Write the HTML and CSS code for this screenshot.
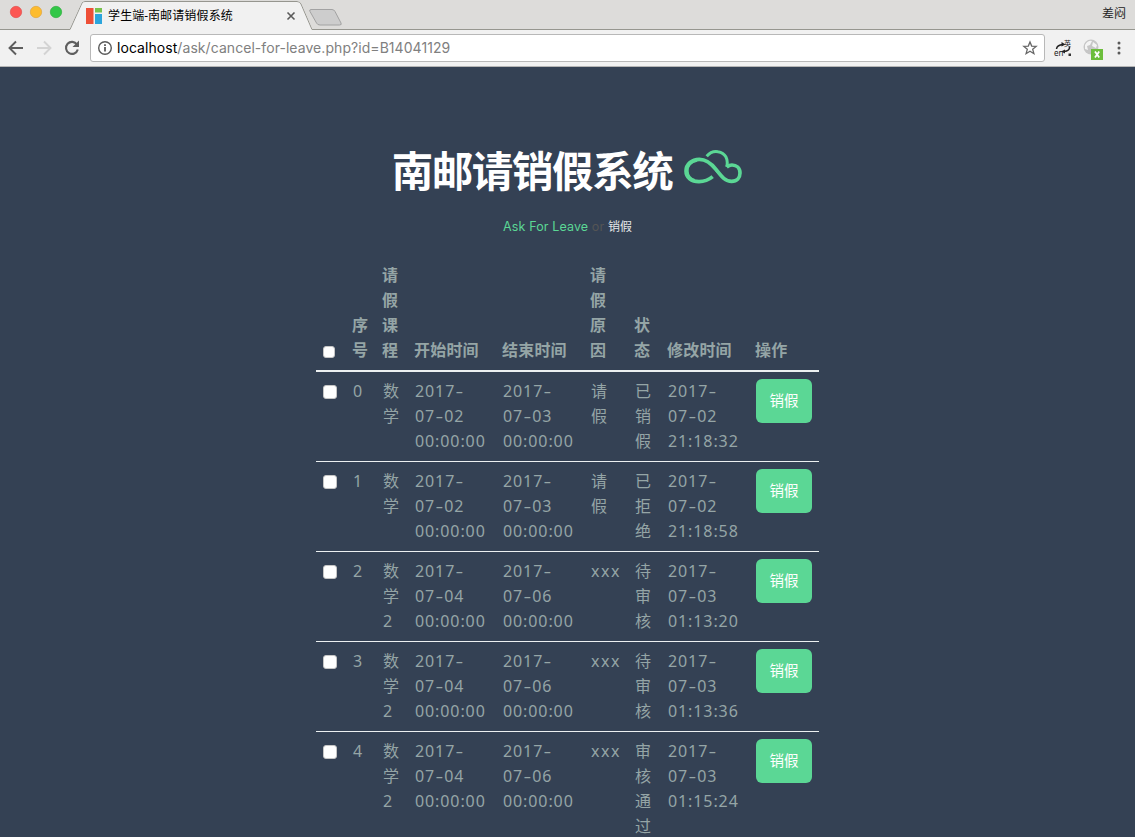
FILE: index.html
```
<!DOCTYPE html>
<html lang="zh-CN">
<head>
<meta charset="utf-8">
<title>学生端-南邮请销假系统</title>
<link rel="stylesheet" href="styles.css">
</head>
<body>
<header class="browser">
  <svg class="tabstrip" width="1135" height="30" viewBox="0 0 1135 30">
    <path d="M0 29.5H70L82 3Q83 1.5 85 1.5H297Q300 1.5 301 4L312 29.5H1135V31H0Z" fill="#f1f1f1" stroke="#96968f"/>
    <path d="M0 0H1135V29H312.500L301.500 3.500Q300 1 297 1H85Q83 1 81.500 3L69.500 29H0Z" fill="#dddcda"/>
    <circle cx="16" cy="12" r="5.7" fill="#fc5753" stroke="#df4744" stroke-width=".6"/>
    <circle cx="36" cy="12" r="5.7" fill="#fdbc2e" stroke="#de9f34" stroke-width=".6"/>
    <circle cx="56" cy="12" r="5.7" fill="#33c748" stroke="#27aa35" stroke-width=".6"/>
    <path d="M86 8h7.5v16H86z" fill="#ee4f37"/>
    <path d="M95 8h7v4.5h-7z" fill="#79c14d"/>
    <path d="M95 14h7v10h-7z" fill="#2ca5dc"/>
    <path d="M287.5 12.5l7 7m0-7l-7 7" stroke="#5a5a5a" stroke-width="1.6"/>
    <path d="M311 9.5H332Q334 9.5 335 11.500L341 23Q342 25 339.500 25H320Q317.500 25 316.500 23L310 11.500Q309 9.500 311 9.500Z" fill="#cdcdcd" stroke="#a2a2a2"/>
  </svg>
  <span class="tab-title">学生端-南邮请销假系统</span>
  <span class="profile">差闷</span>
  <div class="toolbar">
    <svg class="nav" width="90" height="36" viewBox="0 0 90 36" fill="none" stroke-width="1.9">
      <path d="M23 18H10M16 11.500L9.500 18L16 24.500" stroke="#5e5e5e"/>
      <path d="M37 18h13M44 11.500L50.500 18L44 24.500" stroke="#d3d3d3"/>
      <path d="M77 14.500A6 6 0 1 0 77.800 19.500" stroke="#5e5e5e" stroke-width="2.100"/>
      <path d="M79 10.500V17H72.500Z" fill="#5e5e5e"/>
    </svg>
    <div class="address">
      <svg width="16" height="16" viewBox="0 0 16 16"><circle cx="8" cy="8" r="6.300" fill="none" stroke="#5a5a5a" stroke-width="1.400"/><path d="M7.100 7h1.800v4.500H7.100zM7.100 4.200h1.800v1.700H7.100z" fill="#5a5a5a"/></svg>
      <span class="url"><b>localhost</b>/ask/cancel-for-leave.php?id=B14041129</span>
      <svg class="star" width="16" height="16" viewBox="0 0 16 16"><path d="M8 1.900L9.700 6.100L14.200 6.400L10.700 9.300L11.900 13.700L8 11.300L4.100 13.700L5.300 9.300L1.800 6.400L6.300 6.100Z" fill="none" stroke="#666" stroke-width="1.300"/></svg>
    </div>
    <svg class="tools" width="90" height="36" viewBox="0 0 90 36">
      <path d="M11.500 19Q12 15 18 14.500M24.500 16.500Q25 21 19 21.500" fill="none" stroke="#222" stroke-width="1.500"/>
      <path d="M16.500 12l4 2.500-4 2zM20 19.500l-4 2 4 2z" fill="#222"/>
      <text x="9" y="26" class="en">en</text>
      <text x="19" y="16" class="zh">英</text>
      <path d="M23.500 23.500h2.500v2.500h-2.500z" fill="#333"/>
      <circle cx="46" cy="17" r="7.500" fill="#c6c6c6"/>
      <path d="M40 15Q43 10 47 11L45 15L42 16L43 20L40 19ZM48 12L52 15L51 18L47 16Z" fill="#f4f4f4"/>
      <path d="M46 19h12v11H46z" fill="#6cbe3c"/>
      <path d="M50 21.500l4.200 6m0-6l-4.200 6" stroke="#fff" stroke-width="1.800"/>
      <circle cx="74" cy="13" r="1.500" fill="#5a5a5a"/><circle cx="74" cy="18" r="1.500" fill="#5a5a5a"/><circle cx="74" cy="23" r="1.500" fill="#5a5a5a"/>
    </svg>
  </div>
</header>
<main class="page">
  <h1 class="title"><span>南邮请销假系统</span>
    <svg class="cloud" width="60" height="38" viewBox="0 0 180 114" fill="none" stroke="#5bd795" stroke-linejoin="round">
      <path d="M89 83C77 93 65 98 48 98C25 98 9 86 9 66C9 46 26 31 49 31C71 31 87 46 99 61C114 80 125 97 146 97C162 97 171 86 171 72C171 57 160 48 147 48C141 48 136 50 131 54" stroke-width="11"/>
      <path d="M13 66C13 48 26 37 42 34M13 66C13 80 23 91 35 94M80 43C94 56 107 74 122 88" stroke-width="8"/>
      <path d="M71 22C81 10 94 6 105 8C127 11 137 31 131 54" stroke-width="9"/>
    </svg>
  </h1>
  <p class="links"><a class="ask">Ask For Leave</a> or <span class="cancel">销假</span></p>
  <table class="records">
    <colgroup><col class="c-check"><col class="c-no"><col class="c-course"><col class="c-time"><col class="c-time"><col class="c-reason"><col class="c-state"><col class="c-time"><col class="c-action"></colgroup>
    <thead><tr><th><i class="box box-small"></i></th><th>序号</th><th>请假课程</th><th>开始时间</th><th>结束时间</th><th>请<br>假<br>原<br>因</th><th>状态</th><th>修改时间</th><th>操作</th></tr></thead>
    <tbody>
      <tr><td><i class="box"></i></td><td>0</td><td>数学</td><td>2017<s>-</s><br>07<s>-</s>02<br>00:00:00</td><td>2017<s>-</s><br>07<s>-</s>03<br>00:00:00</td><td>请<br>假</td><td>已销假</td><td>2017<s>-</s><br>07<s>-</s>02<br>21:18:32</td><td><button class="btn">销假</button></td></tr>
      <tr><td><i class="box"></i></td><td>1</td><td>数学</td><td>2017<s>-</s><br>07<s>-</s>02<br>00:00:00</td><td>2017<s>-</s><br>07<s>-</s>03<br>00:00:00</td><td>请<br>假</td><td>已拒绝</td><td>2017<s>-</s><br>07<s>-</s>02<br>21:18:58</td><td><button class="btn">销假</button></td></tr>
      <tr><td><i class="box"></i></td><td>2</td><td>数学<br>2</td><td>2017<s>-</s><br>07<s>-</s>04<br>00:00:00</td><td>2017<s>-</s><br>07<s>-</s>06<br>00:00:00</td><td>xxx</td><td>待审核</td><td>2017<s>-</s><br>07<s>-</s>03<br>01:13:20</td><td><button class="btn">销假</button></td></tr>
      <tr><td><i class="box"></i></td><td>3</td><td>数学<br>2</td><td>2017<s>-</s><br>07<s>-</s>04<br>00:00:00</td><td>2017<s>-</s><br>07<s>-</s>06<br>00:00:00</td><td>xxx</td><td>待审核</td><td>2017<s>-</s><br>07<s>-</s>03<br>01:13:36</td><td><button class="btn">销假</button></td></tr>
      <tr><td><i class="box"></i></td><td>4</td><td>数学<br>2</td><td>2017<s>-</s><br>07<s>-</s>04<br>00:00:00</td><td>2017<s>-</s><br>07<s>-</s>06<br>00:00:00</td><td>xxx</td><td>审核通过</td><td>2017<s>-</s><br>07<s>-</s>03<br>01:15:24</td><td><button class="btn">销假</button></td></tr>
    </tbody>
  </table>
</main>
</body>
</html>
```
FILE: styles.css
```
* { box-sizing: border-box; }
body {
  margin: 0;
  height: 837px;
  overflow: hidden;
  background: #344154;
  font-family: "Noto Sans", "Noto Sans CJK SC", sans-serif;
}
.browser { position: relative; height: 67px; background: #f1f1f1; border-bottom: 1px solid #b5b5b5; }
.tabstrip { display: block; background: #dddcda; }
.tab-title {
  position: absolute; left: 108px; top: 6px;
  font: 12px/20px Roboto, "Noto Sans CJK SC", sans-serif; letter-spacing: .15px; color: #000; white-space: nowrap;
}
.profile {
  position: absolute; right: 9px; top: 3px;
  font: 12px/20px "Noto Sans CJK SC", sans-serif; color: #222;
}
.toolbar { display: flex; align-items: center; height: 36px; }
.nav, .tools { flex: none; }
.address {
  flex: 1; display: flex; align-items: center; gap: 4px; height: 28px; padding: 0 6px;
  background: #fff; border: 1px solid #b8b8b8; border-radius: 3px;
}
.url { flex: 1; font: 14px/20px Inter, Roboto, sans-serif; letter-spacing: .06px; color: #808080; white-space: nowrap; }
.url b { font-weight: 400; color: #000; }
.en { font: 8px "Noto Sans", sans-serif; fill: #222; }
.zh { font: 7px "Noto Sans CJK SC", sans-serif; fill: #222; }
.page { display: flex; flex-direction: column; align-items: center; padding-top: 72px; }
.title {
  display: flex; align-items: center; gap: 11px; margin: 0; height: 60px;
  font: 700 41.500px/60px "Noto Sans CJK SC", sans-serif; letter-spacing: -1.400px; color: #fff;
}
.cloud { margin-top: -3px; }
.links {
  margin: 18px 0 0; height: 20px;
  font: 12.500px/20px Inter, "Noto Sans CJK SC", sans-serif; letter-spacing: .12px; color: #555;
}
.ask { color: #5bd795; }
.cancel { font-size: 12px; letter-spacing: 0; color: #e4e6e8; }
.records {
  width: 503px; margin-top: 25px; table-layout: fixed; border-collapse: separate; border-spacing: 0;
  font-size: 16px; line-height: 25px; color: #95a5a6;
}
.c-check, .c-no { width: 30px; }
.c-course { width: 32px; }
.c-time { width: 88px; }
.c-reason { width: 44px; }
.c-state { width: 33px; }
.c-action { width: 70px; }
th, td { padding: 7px 0 7px 7px; text-align: left; }
th { vertical-align: bottom; font-family: "Noto Sans CJK SC", sans-serif; font-weight: 700; padding-top: 0; padding-bottom: 8px; padding-left: 6px; letter-spacing: .2px; border-bottom: 2px solid #ecf0f1; }
th:first-child { padding-left: 7px; padding-bottom: 7px; }
td { height: 90px; vertical-align: top; letter-spacing: .9px; border-bottom: 1px solid #ecf0f1; }
td:nth-child(3), td:nth-child(7) { letter-spacing: .5px; }
td:nth-child(6) { letter-spacing: 1.500px; }
td s { display: inline-block; text-decoration: none; transform: scaleX(1.500); margin: 0 1.500px; }
.box { display: block; width: 14px; height: 14px; margin-top: 6px; background: #fff; border: 1px solid #c5c5c5; border-radius: 3px; }
.box-small { width: 12px; height: 12px; margin: 0 0 5px; }
.btn {
  display: block; width: 56px; height: 44px; padding: 0 0 2px; border: 0; border-radius: 6px;
  background: #5bd795; color: #fff; font: 14.500px/42px "Noto Sans CJK SC", sans-serif;
}
```
